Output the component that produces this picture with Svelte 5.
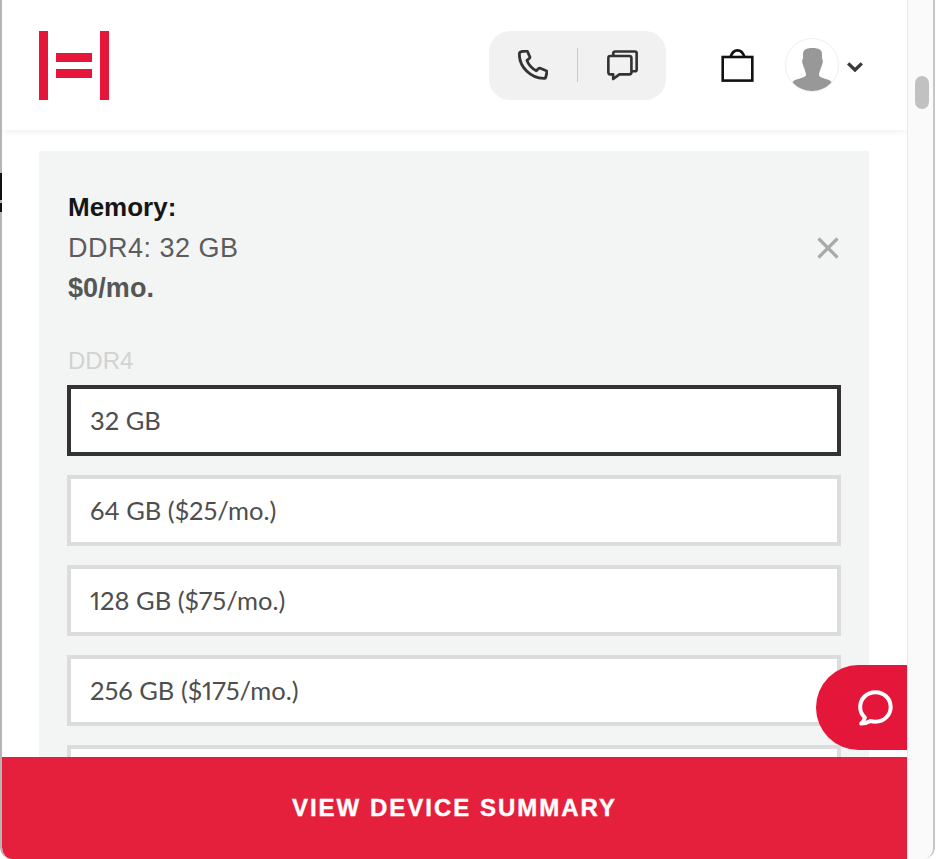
<script>
  const options = ['64 GB ($25/mo.)', '128 GB ($75/mo.)', '256 GB ($175/mo.)', ''];
</script>

<div class="root">
  <span class="mark m1"></span>
  <span class="mark m2"></span>
  <div class="window">
    <div class="page">
      <header class="header">
        <svg class="logo" width="70" height="69" viewBox="0 0 70 69" aria-label="logo">
          <rect x="0" y="0" width="9" height="69" fill="#e4173a" />
          <rect x="61" y="0" width="9" height="69" fill="#e4173a" />
          <rect x="17" y="22" width="36" height="9" fill="#e4173a" />
          <rect x="17" y="38" width="36" height="9" fill="#e4173a" />
        </svg>
        <div class="contact">
          <svg width="30" height="30" viewBox="2 2 27.5 27.5" fill="none" stroke="#333" stroke-width="2.6" stroke-linejoin="round" stroke-linecap="round">
            <path d="M5 3.5 L9.2 2.9 C10 2.8 10.6 3.1 10.9 3.8 L12.8 8.2 C13 8.8 12.8 9.4 12.3 9.8 L10.2 11.5 C11.6 15.5 14.6 18.8 18.8 21 L20.8 19 C21.3 18.6 21.9 18.5 22.4 18.7 L27.4 20.8 C28.2 21.1 28.6 21.8 28.4 22.6 L27.6 26.4 C27.4 27.3 26.6 28 25.6 28 C13.6 28 3.2 17.6 3.2 5.7 C3.2 4.6 3.9 3.8 5 3.5 Z" />
          </svg>
          <span class="divider"></span>
          <svg width="31" height="31" viewBox="0 0 32 32" fill="none" stroke="#333" stroke-width="2.7" stroke-linejoin="round">
            <path d="M6.5 5.5 V3.5 C6.5 2.2 7.3 1.5 8.5 1.5 H29 C30 1.5 30.6 2.1 30.6 3.2 V20 C30.6 21.2 29.8 22 28.6 22 H25.5" />
            <path d="M3.2 6.2 H23 C24.4 6.2 25.2 7 25.2 8.4 V23 C25.2 24.4 24.4 25.2 23 25.2 H12.8 L6.4 30 V25.2 H3.2 C2 25.2 1.4 24.4 1.4 23 V8.4 C1.4 7 2 6.2 3.2 6.2 Z" />
          </svg>
        </div>
        <svg class="bag" width="33" height="33" viewBox="0 0 33 33" fill="none" stroke="#111" stroke-width="2.6">
          <rect x="1.7" y="8" width="29.6" height="23.6" />
          <path d="M9.5 8 C11 3.5 13.5 1.4 16.5 1.4 C19.5 1.4 22 3.5 23.5 8" />
        </svg>
        <div class="avatar">
          <svg width="54" height="54" viewBox="0 0 54 54">
            <circle cx="27" cy="27" r="26.5" fill="#fff" stroke="#eee" />
            <clipPath id="c"><circle cx="27" cy="27" r="26" /></clipPath>
            <path clip-path="url(#c)" fill="#989899" d="M18 16 C18 12 21 10 27.5 10 C34 10 37 12 37 16 V21 C38.2 21 38 25 37 27 C36.4 29 36 29.5 35.5 31 C35 33 34 35 34 37 C34 39 38 40 44 42 C46 43 48 45 50 50 V54 H4 V50 C6 45 8 43 10 42 C16 40 21 39 21 37 C21 35 20 33 19.5 31 C19 29.5 18.6 29 18 27 C17 25 16.8 21 18 21 Z" />
          </svg>
        </div>
        <svg class="chev" width="16" height="10" viewBox="0 0 16 10" fill="none" stroke="#3a3a3a" stroke-width="3.4">
          <path d="M1.2 1.4 L8 8 L14.8 1.4" />
        </svg>
      </header>

      <section class="panel">
        <div class="summary">
          <div>
            <div class="title">Memory:</div>
            <div class="value">DDR4: 32 GB</div>
            <div class="price">$0/mo.</div>
          </div>
          <svg class="close" width="22" height="22" viewBox="0 0 22 22" stroke="#a9a9a9" stroke-width="3.2">
            <path d="M1.5 1.5 L20.5 20.5 M20.5 1.5 L1.5 20.5" />
          </svg>
        </div>
        <div class="group">DDR4</div>
        <div class="opts">
          <div class="opt selected">32 GB</div>
          {#each options as o}
            <div class="opt">{o}</div>
          {/each}
        </div>
      </section>

      <button class="chat" aria-label="chat">
        <svg width="40" height="40" viewBox="0 0 38 38" fill="none" stroke="#fff" stroke-width="3.8" stroke-linejoin="round" stroke-linecap="round">
          <path d="M7.5 28 C4.6 25.4 3 22 3 18 C3 10.3 9.3 4 17.5 4 C25.7 4 32 10.3 32 18 C32 25.7 25.7 32 17.5 32 C15.8 32 14.3 31.7 12.8 31.3 C10.5 32.6 7.5 33.6 4 33.8 C5.8 32.2 7 30.2 7.5 28 Z" />
        </svg>
      </button>

      <button class="cta">VIEW DEVICE SUMMARY</button>
    </div>
    <div class="scrollbar"><div class="thumb"></div></div>
  </div>
</div>

<style>
  :global(body) {
    margin: 0;
    background: #fff;
  }
  .root {
    width: 939px;
    height: 859px;
    position: relative;
    overflow: hidden;
  }
  .window {
    width: 935px;
    height: 859px;
    display: flex;
    box-sizing: border-box;
    border-left: 2px solid #b5b5b5;
    border-right: 2px solid #c6c6c6;
    border-bottom-left-radius: 12px;
    border-bottom-right-radius: 12px;
    overflow: hidden;
    font-family: "Liberation Sans", Arial, sans-serif;
  }
  .mark {
    position: absolute;
    z-index: 1;
    left: 0;
    width: 2px;
    background: #111;
  }
  .m1 {
    top: 173px;
    height: 27px;
  }
  .m2 {
    top: 203px;
    height: 9px;
  }
  .page {
    width: 905px;
    height: 859px;
    position: relative;
    overflow: hidden;
    background: #fff;
  }
  .header {
    height: 130px;
    box-sizing: border-box;
    display: flex;
    align-items: center;
    padding: 0 44px 0 37px;
    box-shadow: 0 1px 8px rgba(0, 0, 0, 0.07);
    position: relative;
  }
  .logo {
    margin-right: auto;
  }
  .contact {
    width: 177px;
    height: 69px;
    background: #f1f1f1;
    border-radius: 21px;
    display: flex;
    align-items: center;
    justify-content: center;
    gap: 29px;
  }
  .divider {
    width: 1px;
    height: 34px;
    background: #c9c9c9;
  }
  .bag {
    margin-left: 55px;
  }
  .avatar {
    margin-left: 31px;
    height: 54px;
  }
  .chev {
    margin-left: 8px;
    margin-top: 4px;
  }
  .panel {
    margin: 21px 38px 0 37px;
    height: 700px;
    background: #f3f5f4;
    padding: 37px 28px 0 28px;
    box-sizing: border-box;
  }
  .summary {
    display: flex;
    justify-content: space-between;
    align-items: center;
    padding: 0 2px 0 1px;
  }
  .title {
    font-size: 26px;
    font-weight: 700;
    line-height: 40px;
    margin: -1px 0 1px;
    color: #161616;
  }
  .value {
    font-size: 27px;
    letter-spacing: 0.5px;
    line-height: 40px;
    color: #5c5c5c;
  }
  .price {
    font-size: 27px;
    font-weight: 700;
    letter-spacing: 0.1px;
    line-height: 40px;
    color: #565656;
  }
  .group {
    margin-top: 33px;
    padding-left: 1px;
    font-size: 24px;
    line-height: 40px;
    color: #d2d2d2;
  }
  .opts {
    display: flex;
    flex-direction: column;
    gap: 19px;
    margin-top: 4px;
  }
  .opt {
    height: 71px;
    flex: none;
    box-sizing: border-box;
    border: 4px solid #dcdcdc;
    background: #fff;
    display: flex;
    align-items: center;
    padding: 0 0 2px 19px;
    font-family: "Lato", sans-serif;
    font-variant-numeric: proportional-nums;
    font-size: 25.5px;
    color: #4e4e4e;
  }
  .opt.selected {
    border-color: #333;
  }
  .chat {
    position: absolute;
    right: 0;
    top: 665px;
    width: 91px;
    height: 85px;
    border: 0;
    padding: 0 10px 0 0;
    background: #e4173a;
    border-radius: 43px 0 0 43px;
    display: flex;
    align-items: center;
    justify-content: flex-end;
  }
  .cta {
    position: absolute;
    left: 0;
    bottom: 0;
    width: 100%;
    height: 102px;
    border: 0;
    background: #e5203d;
    color: #fff;
    font-family: "Liberation Sans", Arial, sans-serif;
    font-weight: 700;
    font-size: 24px;
    letter-spacing: 2px;
    -webkit-text-stroke: 0.4px #fff;
  }
  .scrollbar {
    flex: 1;
    background: #fafafa;
    border-left: 1px solid #e8e8e8;
    padding: 76px 4px 0 6px;
  }
  .thumb {
    height: 33px;
    width: 14px;
    margin-left: 1px;
    border-radius: 8px;
    background: #c1c1c1;
  }
</style>
